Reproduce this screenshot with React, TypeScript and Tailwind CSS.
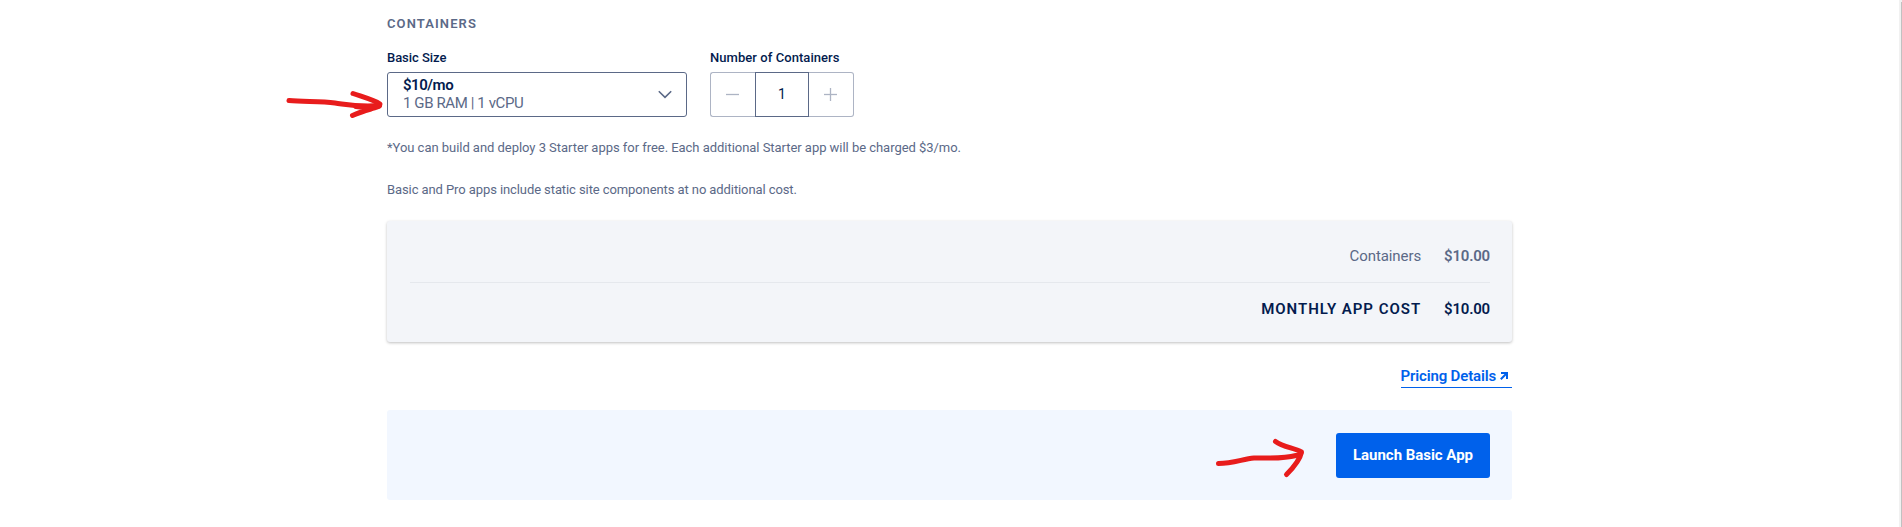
function ChevronDown() {
  return (
    <svg width="14" height="9" viewBox="0 0 14 9" fill="none" stroke="#5b6987" strokeWidth="1.6">
      <path d="M0.8 1.2 7 7.4 13.2 1.2" />
    </svg>
  );
}

function Sign({ plus }: { plus?: boolean }) {
  return (
    <svg width="13" height="13" viewBox="0 0 13 13" fill="none" stroke="#adb4c4" strokeWidth="1.3">
      <path d="M0 6.5H13" />
      {plus && <path d="M6.5 0V13" />}
    </svg>
  );
}

function ExternalArrow() {
  return (
    <svg width="8" height="8" viewBox="0 0 8 8" fill="none" stroke="#0061eb" strokeWidth="2">
      <path d="M1 1H7V7M7 1 0.8 7.2" />
    </svg>
  );
}

function SizeSelect() {
  return (
    <div className="w-[300px]">
      <div className="text-[13px] leading-[18px] font-medium tracking-[-0.05px] text-[#031b4e]">Basic Size</div>
      <div className="mt-[5px] flex h-[45px] items-center justify-between rounded-[3px] border border-[#5b6987] pr-[14px] pl-[15px]">
        <div className="pb-[2px] text-[15px] leading-[18px]">
          <div className="font-semibold tracking-[-0.45px] text-[#031b4e]">$10/mo</div>
          <div className="tracking-[-0.39px] text-[#5b6987]">1 GB RAM | 1 vCPU</div>
        </div>
        <ChevronDown />
      </div>
    </div>
  );
}

function CountStepper() {
  return (
    <div className="w-[144px]">
      <div className="text-[13px] leading-[18px] font-medium tracking-[0.06px] text-[#031b4e]">Number of Containers</div>
      <div className="mt-[5px] flex h-[45px]">
        <button className="flex w-[45px] items-center justify-center rounded-l-[3px] border border-r-0 border-[#adb4c4] pr-[2px]">
          <Sign />
        </button>
        <div className="flex w-[54px] items-center justify-center border border-[#5b6987] text-[14px] text-[#031b4e]">1</div>
        <button className="flex w-[45px] items-center justify-center rounded-r-[3px] border border-l-0 border-[#adb4c4] pr-[1px]">
          <Sign plus />
        </button>
      </div>
    </div>
  );
}

function CostSummary() {
  return (
    <div className="mt-[21px] h-[121px] rounded-[3px] bg-[#f3f5f9] pr-[22px] pl-[23px] text-[15px] leading-[20px] shadow-[0_1px_3px_rgba(0,0,0,0.25)]">
      <div className="flex h-[62px] items-start justify-end border-b border-[#e5e8ed] pt-[25px] text-[#5b6987]">
        <span className="tracking-[-0.09px]">Containers</span>
        <span className="ml-[23px] font-semibold tracking-[-0.2px]">$10.00</span>
      </div>
      <div className="flex justify-end pt-[16px] font-semibold text-[#031b4e]">
        <span className="tracking-[0.97px]">MONTHLY APP COST</span>
        <span className="ml-[23px] tracking-[-0.2px]">$10.00</span>
      </div>
    </div>
  );
}

function Annotations() {
  return (
    <svg
      className="pointer-events-none absolute top-0 left-0"
      width="1902"
      height="527"
      viewBox="0 0 1902 527"
      fill="none"
      stroke="#e81c1c"
      strokeWidth="5"
      strokeLinecap="round"
      strokeLinejoin="round"
    >
      <path d="M289 100.5C303 102 320 101 335 103C350 105 358 107 379 105.5" />
      <path d="M353 93.5C363 97 374 100 380 104C380 107 377 107 371 109C364 111 358 113 352.500 115.500" />
      <path d="M356 106.500C363 107.500 372 107 379 106" />
      <path d="M1218.500 463.500C1233 463.500 1243 459 1254 458C1268 458 1283 459 1296 455.500C1299 455 1301 454 1301 453" />
      <path d="M1275.500 441.500C1283 447 1294 448 1301.500 452C1300 460 1293 468 1286.500 474.500" />
    </svg>
  );
}

export default function App() {
  return (
    <div className="relative flex h-[527px] w-[1902px] justify-between overflow-hidden bg-white font-['Roboto',sans-serif]">
      <main className="ml-[387px] w-[1125px] pt-[14px]">
        <h2 className="text-[13px] leading-[20px] font-semibold tracking-[1.1px] text-[#5b6987]">CONTAINERS</h2>
        <div className="mt-[15px] flex gap-[23px]">
          <SizeSelect />
          <CountStepper />
        </div>
        <div className="mt-[20px] text-[13px] leading-[21px] text-[#5b6987]">
          <p className="tracking-[-0.037px]">
            *You can build and deploy 3 Starter apps for free. Each additional Starter app will be charged $3/mo.
          </p>
          <p className="mt-[21px] tracking-[-0.09px]">
            Basic and Pro apps include static site components at no additional cost.
          </p>
        </div>
        <CostSummary />
        <div className="mt-[22px] flex justify-end">
          <a className="flex h-[24px] items-start border-b border-[#0061eb] pr-[4px] text-[15px] leading-[24px] font-semibold tracking-[-0.15px] text-[#0061eb]">
            Pricing Details
            <span className="mt-[8px] ml-[4px]">
              <ExternalArrow />
            </span>
          </a>
        </div>
        <div className="mt-[22px] flex h-[90px] items-center justify-end rounded-[3px] bg-[#f2f7ff] pr-[22px]">
          <button className="h-[45px] w-[154px] rounded-[3px] bg-[#0061eb] text-[15px] font-bold tracking-[-0.03px] text-white">
            Launch Basic App
          </button>
        </div>
      </main>
      <div className="h-full w-[3px] bg-[#f1f1f1] pt-[2px] pl-[2px]">
        <div className="h-full bg-[#c1c1c1]" />
      </div>
      <Annotations />
    </div>
  );
}
